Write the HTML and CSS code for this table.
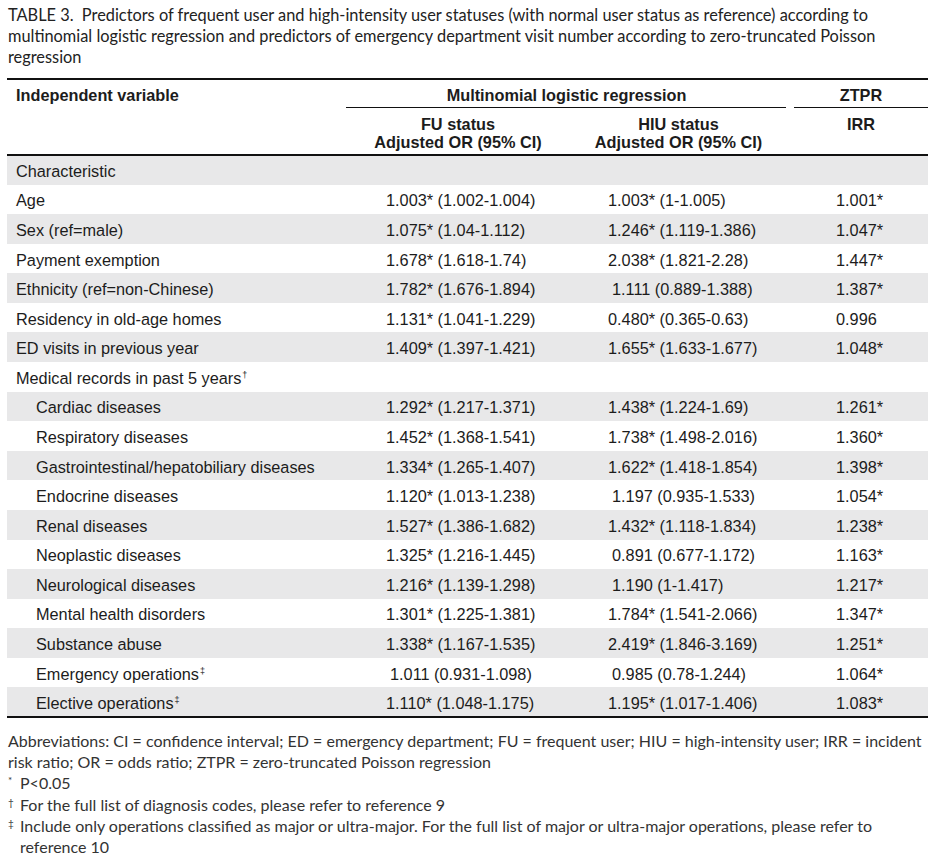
FILE: index.html
```html
<!DOCTYPE html>
<html lang="en">
<head>
<meta charset="utf-8">
<title>Table 3</title>
<link rel="stylesheet" href="styles.css">
</head>
<body>
<div class="page">
  <p class="caption">TABLE 3.&nbsp; Predictors of frequent user and high-intensity user statuses (with normal user status as reference) according to multinomial logistic regression and predictors of emergency department visit number according to zero-truncated Poisson regression</p>

  <table class="data">
    <colgroup>
      <col class="c-var">
      <col class="c-fu">
      <col class="c-hiu">
      <col class="c-irr">
    </colgroup>
    <thead>
      <tr class="h1">
        <th class="th-var">Independent variable</th>
        <th class="th-group" colspan="2">Multinomial logistic regression</th>
        <th class="th-ztpr">ZTPR</th>
      </tr>
      <tr class="h2">
        <th></th>
        <th class="th-sub">FU status<br>Adjusted OR (95% CI)</th>
        <th class="th-sub">HIU status<br>Adjusted OR (95% CI)</th>
        <th class="th-sub th-irr">IRR</th>
      </tr>
    </thead>
    <tbody>
      <tr class="shade"><td>Characteristic</td><td></td><td></td><td></td></tr>
      <tr><td>Age</td><td>1.003* (1.002-1.004)</td><td>1.003* (1-1.005)</td><td>1.001*</td></tr>
      <tr class="shade"><td>Sex (ref=male)</td><td>1.075* (1.04-1.112)</td><td>1.246* (1.119-1.386)</td><td>1.047*</td></tr>
      <tr><td>Payment exemption</td><td>1.678* (1.618-1.74)</td><td>2.038* (1.821-2.28)</td><td>1.447*</td></tr>
      <tr class="shade"><td>Ethnicity (ref=non-Chinese)</td><td>1.782* (1.676-1.894)</td><td class="ns">1.111 (0.889-1.388)</td><td>1.387*</td></tr>
      <tr><td>Residency in old-age homes</td><td>1.131* (1.041-1.229)</td><td>0.480* (0.365-0.63)</td><td>0.996</td></tr>
      <tr class="shade"><td>ED visits in previous year</td><td>1.409* (1.397-1.421)</td><td>1.655* (1.633-1.677)</td><td>1.048*</td></tr>
      <tr><td>Medical records in past 5 years<sup>†</sup></td><td></td><td></td><td></td></tr>
      <tr class="shade"><td class="ind">Cardiac diseases</td><td>1.292* (1.217-1.371)</td><td>1.438* (1.224-1.69)</td><td>1.261*</td></tr>
      <tr><td class="ind">Respiratory diseases</td><td>1.452* (1.368-1.541)</td><td>1.738* (1.498-2.016)</td><td>1.360*</td></tr>
      <tr class="shade"><td class="ind">Gastrointestinal/hepatobiliary diseases</td><td>1.334* (1.265-1.407)</td><td>1.622* (1.418-1.854)</td><td>1.398*</td></tr>
      <tr><td class="ind">Endocrine diseases</td><td>1.120* (1.013-1.238)</td><td class="ns">1.197 (0.935-1.533)</td><td>1.054*</td></tr>
      <tr class="shade"><td class="ind">Renal diseases</td><td>1.527* (1.386-1.682)</td><td>1.432* (1.118-1.834)</td><td>1.238*</td></tr>
      <tr><td class="ind">Neoplastic diseases</td><td>1.325* (1.216-1.445)</td><td class="ns">0.891 (0.677-1.172)</td><td>1.163*</td></tr>
      <tr class="shade"><td class="ind">Neurological diseases</td><td>1.216* (1.139-1.298)</td><td class="ns">1.190 (1-1.417)</td><td>1.217*</td></tr>
      <tr><td class="ind">Mental health disorders</td><td>1.301* (1.225-1.381)</td><td>1.784* (1.541-2.066)</td><td>1.347*</td></tr>
      <tr class="shade"><td class="ind">Substance abuse</td><td>1.338* (1.167-1.535)</td><td>2.419* (1.846-3.169)</td><td>1.251*</td></tr>
      <tr><td class="ind">Emergency operations<sup>‡</sup></td><td class="ns">1.011 (0.931-1.098)</td><td class="ns">0.985 (0.78-1.244)</td><td>1.064*</td></tr>
      <tr class="shade"><td class="ind">Elective operations<sup>‡</sup></td><td>1.110* (1.048-1.175)</td><td>1.195* (1.017-1.406)</td><td>1.083*</td></tr>
    </tbody>
  </table>

  <div class="notes">
    <p class="abbr">Abbreviations: CI = confidence interval; ED = emergency department; FU = frequent user; HIU = high-intensity user; IRR = incident risk ratio; OR = odds ratio; ZTPR = zero-truncated Poisson regression</p>
    <div class="note"><span class="mark">*</span><span>P&lt;0.05</span></div>
    <div class="note"><span class="mark">†</span><span>For the full list of diagnosis codes, please refer to reference 9</span></div>
    <div class="note"><span class="mark">‡</span><span>Include only operations classified as major or ultra-major. For the full list of major or ultra-major operations, please refer to reference 10</span></div>
  </div>
</div>
</body>
</html>
```
FILE: styles.css
```css
html, body {
  margin: 0;
  padding: 0;
  background: #ffffff;
}

.page {
  padding: 4px 0 0 8px;
  width: 925px;
}

.caption {
  margin: 0;
  font-family: "Lato", "Open Sans", sans-serif;
  font-size: 16.35px;
  line-height: 21px;
  color: #222;
  width: 915px;
}

.data {
  margin: 11px 0 0 -1px;
  width: 921px;
  table-layout: fixed;
  border-collapse: collapse;
  font-family: "Liberation Sans", Arial, sans-serif;
  font-size: 16.3px;
  color: #1c1c1c;
  border-top: 2px solid #111;
  border-bottom: 2px solid #111;
}

.c-var { width: 339px; }
.c-fu { width: 224px; }
.c-hiu { width: 217px; }
.c-irr { width: 141px; }

.data th {
  font-weight: bold;
  padding: 0;
  vertical-align: middle;
}

.h1 { height: 29px; }
.h1 th { padding-top: 3px; }

.th-var {
  text-align: left;
  padding-left: 9px !important;
}

.th-group {
  text-align: center;
  background: linear-gradient(#111, #111) no-repeat left bottom / calc(100% - 1px) 1.5px;
}

.th-ztpr {
  text-align: center;
  padding-left: 7px !important;
  background: linear-gradient(#111, #111) no-repeat right bottom / calc(100% - 7px) 1.5px;
}

.h2 {
  height: 47px;
  border-bottom: 2px solid #111;
}

.h2 th {
  line-height: 18px;
  vertical-align: top;
  padding-top: 7px;
}

.th-sub { text-align: center; }
.th-irr { padding-left: 7px !important; }

.data tbody tr { height: 29.58px; }

.data td {
  padding: 3px 0 0 0;
  white-space: nowrap;
  vertical-align: middle;
}

.data td:nth-child(1) { padding-left: 9px; }
.data td:nth-child(2) { padding-left: 40px; }
.data td:nth-child(3) { padding-left: 38px; }
.data td:nth-child(4) { padding-left: 49px; }
.data td.ind { padding-left: 29px; }
.data td:nth-child(2).ns { padding-left: 44px; }
.data td:nth-child(3).ns { padding-left: 42px; }

.shade { background: #e8e8e9; }

.data sup {
  font-size: 9px;
  line-height: 0;
  vertical-align: 6px;
  margin-left: 1px;
}

.notes {
  margin-top: 12px;
  font-family: "Lato", "Open Sans", sans-serif;
  font-size: 16px;
  line-height: 21.2px;
  color: #333;
}

.abbr { margin: 0; width: 920px; }

.note {
  display: flex;
}

.mark {
  flex: 0 0 12px;
  font-size: 10px;
  line-height: 16px;
}
```
